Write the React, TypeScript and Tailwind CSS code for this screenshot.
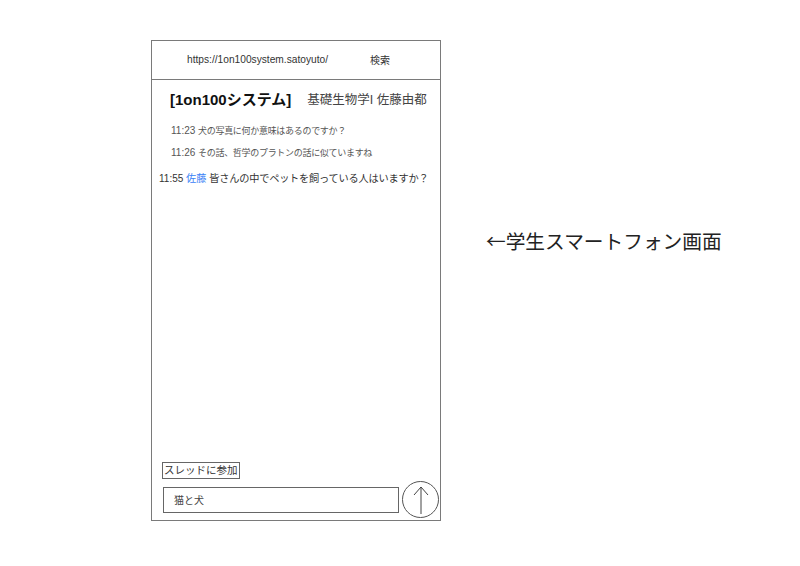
export default function App() {
  const font = { fontFamily: '"Liberation Sans", "Noto Sans CJK JP", sans-serif' };
  return (
    <div className="w-[800px] h-[566px] bg-white flex items-start pt-[40px] pl-[151px]" style={font}>
      <div className="w-[290px] h-[481px] border border-[#7a7a7a] flex flex-col">
        <div className="h-[39px] border-b border-[#7a7a7a] flex items-center pl-[35px] text-[10.2px] text-[#333] whitespace-nowrap">
          <span>https://1on100system.satoyuto/</span>
          <span className="ml-[42px] text-[10px]">検索</span>
        </div>
        <div className="flex items-center mt-[10px] pl-[18px] h-[20px] whitespace-nowrap">
          <span className="text-[15px] font-bold text-[#111]">[1on100システム]</span>
          <span className="ml-[16px] text-[12.5px] text-[#444]">基礎生物学I 佐藤由都</span>
        </div>
        <div className="flex flex-col mt-[14px] text-[#555] whitespace-nowrap">
          <div className="pl-[19px] h-[14px] leading-[14px] text-[10px]">
            11:23 <span className="text-[9px] tracking-[-0.3px]">犬の写真に何か意味はあるのですか？</span>
          </div>
          <div className="pl-[19px] h-[14px] leading-[14px] mt-[8px] text-[10px]">
            11:26 <span className="text-[9px] tracking-[-0.3px]">その話、哲学のプラトンの話に似ていますね</span>
          </div>
          <div className="pl-[7px] h-[14px] leading-[14px] mt-[12px] text-[10px] text-[#333]">
            11:55 <span className="text-[#3b82f6] text-[10.2px]">佐藤</span>{" "}
            <span className="text-[10.2px] tracking-[-0.2px]">皆さんの中でペットを飼っている人はいますか？</span>
          </div>
        </div>
        <div className="flex-1" />
        <div className="pl-[10px]">
          <div className="inline-flex items-center h-[17px] px-[1px] border border-[#666] text-[10.5px] text-[#333] leading-none whitespace-nowrap">
            スレッドに参加
          </div>
        </div>
        <div className="flex items-start pl-[11px] mb-[2px]">
          <div className="w-[236px] h-[26px] mt-[6px] border border-[#666] flex items-center pl-[10px] text-[10px] text-[#444]">
            猫と犬
          </div>
          <div className="ml-[3px] w-[37px] h-[37px] rounded-full border border-[#555] flex items-center justify-center">
            <svg width="20" height="30" viewBox="0 0 20 30" fill="none" stroke="#444" strokeWidth="1">
              <path d="M10 29 V2 M3 10 L10 2 L17 10" />
            </svg>
          </div>
        </div>
      </div>
      <div className="ml-[45px] mt-[188px] text-[19.7px] text-[#222] leading-[26px] whitespace-nowrap" style={{ fontFamily: '"Noto Sans CJK JP", sans-serif' }}>
        ←学生スマートフォン画面
      </div>
    </div>
  );
}
